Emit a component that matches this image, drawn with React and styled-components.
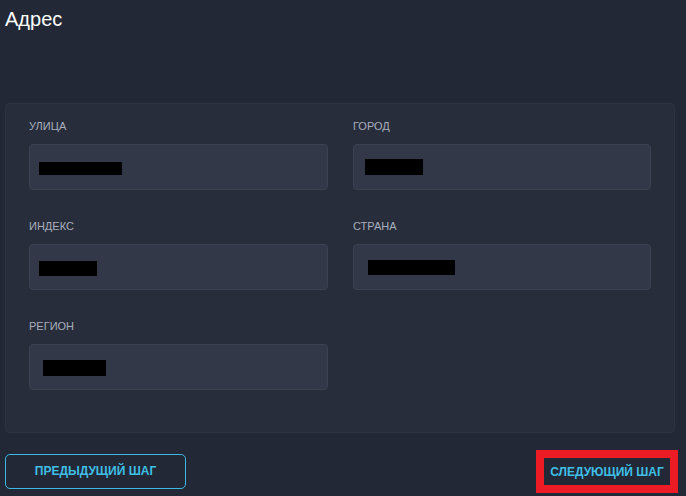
import React from 'react'
import styled, {createGlobalStyle} from 'styled-components'

const GlobalStyle = createGlobalStyle`
    body {
        margin : 0;
        background-color : #222836;
        font-family : "Liberation Sans", Arial, sans-serif;
    }
`

const Page = styled.div`
    width : 686px;
    height : 496px;
    display : flex;
    flex-direction : column;
    overflow : hidden;
`

const Title = styled.h2`
    margin : 8px 0 0 5px;
    font-size : 20px;
    line-height : 23px;
    font-weight : normal;
    color : #ffffff;
`

const Panel = styled.div`
    margin : 72px 11px 0 5px;
    padding : 16px 23px 42px 23px;
    border : 1px solid #2d3342;
    border-radius : 4px;
    background-color : #272d3b;
    display : grid;
    grid-template-columns : 299px 298px;
    column-gap : 25px;
    row-gap : 30px;
`

const Field = styled.div`
    display : flex;
    flex-direction : column;
`

const Label = styled.label`
    font-size : 11px;
    line-height : 13px;
    color : #a9afbc;
    margin-bottom : 11px;
`

const Input = styled.div`
    height : 46px;
    box-sizing : border-box;
    border : 1px solid #3a4151;
    border-radius : 4px;
    background-color : #323847;
    display : flex;
    align-items : center;
`

const Redacted = styled.span`
    display : block;
    background-color : #000000;
    width : ${props => props.$w}px;
    height : ${props => props.$h}px;
    margin-left : ${props => props.$x}px;
    margin-top : ${props => props.$y || 0}px;
`

const Footer = styled.div`
    display : flex;
    justify-content : space-between;
    align-items : center;
    margin : 16px 8px 0 5px;
`

const OutlineButton = styled.button`
    width : 181px;
    height : 35px;
    border : 1px solid #3bb9e2;
    border-radius : 5px;
    background : transparent;
    color : #3fbfe6;
    font-family : "Liberation Sans", Arial, sans-serif;
    font-weight : bold;
    font-size : 12px;
    padding : 0;
    cursor : pointer;
`

const NextButton = styled.button`
    width : 142px;
    height : 43px;
    box-sizing : border-box;
    border : 8px solid #ed1c24;
    background : #222836;
    color : #3fbfe6;
    font-family : "Liberation Sans", Arial, sans-serif;
    font-weight : bold;
    font-size : 12px;
    padding : 0;
    margin-top : 1px;
    cursor : pointer;
`

const fields = [
    {label : 'УЛИЦА', w : 83, h : 13, x : 9, y : 2},
    {label : 'ГОРОД', w : 58, h : 16, x : 11, y : 0},
    {label : 'ИНДЕКС', w : 58, h : 15, x : 9, y : 2},
    {label : 'СТРАНА', w : 87, h : 15, x : 14, y : 0},
    {label : 'РЕГИОН', w : 63, h : 16, x : 13, y : 2},
]

export default function App() {
    return (
        <Page>
            <GlobalStyle />
            <Title>Адрес</Title>
            <Panel>
                {fields.map((f, i) => (
                    <Field key={i}>
                        <Label>{f.label}</Label>
                        <Input>
                            <Redacted $w={f.w} $h={f.h} $x={f.x} $y={f.y} />
                        </Input>
                    </Field>
                ))}
            </Panel>
            <Footer>
                <OutlineButton>ПРЕДЫДУЩИЙ ШАГ</OutlineButton>
                <NextButton>СЛЕДУЮЩИЙ ШАГ</NextButton>
            </Footer>
        </Page>
    )
}
